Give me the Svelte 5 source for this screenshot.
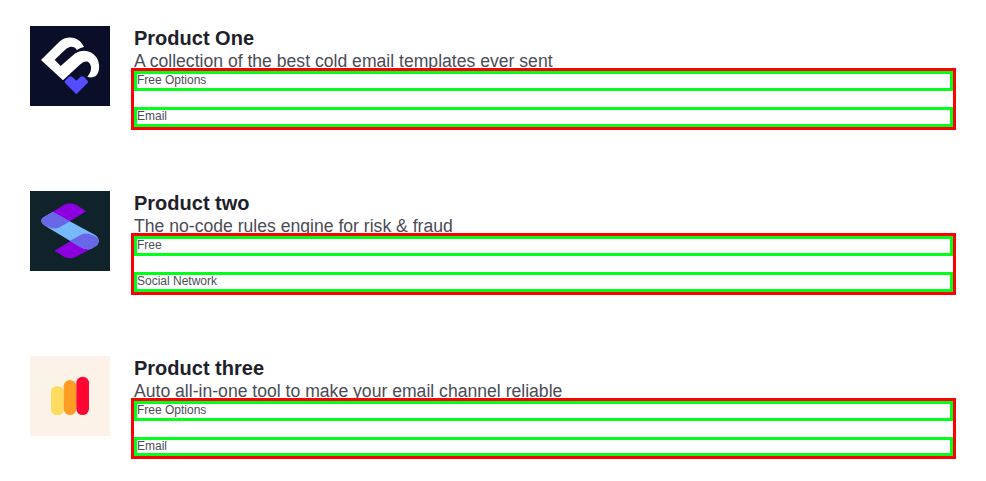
<script>
  const products = [
    { name: 'Product One', text: 'A collection of the best cold email templates ever sent', tags: ['Free Options', 'Email'], logo: 'heart' },
    { name: 'Product two', text: 'The no-code rules engine for risk & fraud', tags: ['Free', 'Social Network'], logo: 'ribbon' },
    { name: 'Product three', text: 'Auto all-in-one tool to make your email channel reliable', tags: ['Free Options', 'Email'], logo: 'bars' }
  ];
</script>

<main>
  {#each products as product}
    <article>
      {#if product.logo === 'heart'}
        <svg class="logo" viewBox="0 0 240 240" aria-hidden="true">
          <rect width="240" height="240" fill="#0b0e29" />
          <path d="M33 102L88 47C108 28 146 28 162 63Q152 64 141 72C132 59 117 59 104 73L74 101L92 120L134 83C156 68 183 72 198 92C212 112 210 140 196 151Q184 157 172 152C184 139 187 122 178 111C170 103 160 107 151 115L99 163Z" fill="#fff" />
          <path d="M105 164L116 153Q121 149 127 153L139 164L151 153Q157 149 162 153L173 164Q176 168 172 172L139 205L106 172Q102 168 105 164Z" fill="#544cff" />
        </svg>
      {:else if product.logo === 'ribbon'}
        <svg class="logo" viewBox="0 0 240 240" aria-hidden="true">
          <rect width="240" height="240" fill="#10232a" />
          <path d="M46 76L103 41Q120 32 138 41L169 61L90 108Q73 117 58 108L41 98Z" fill="#8c00df" />
          <path d="M73 179L153 132Q170 125 184 132L200 142L190 170L138 197Q120 206 102 197Z" fill="#8c00df" />
          <path d="M46 76L68 63L194 131Q206 138 206 149Q206 161 194 167L184 173Q168 178 152 169L50 107Q34 98 34 89Q34 82 46 76Z" fill="#76b9fc" />
          <path d="M46 76L68 63L120 91L90 108Q73 117 58 109L46 104Q34 97 34 89Q34 82 46 76Z" fill="#6767e8" />
          <path d="M120 149L153 131Q168 124 184 131L194 135Q206 142 206 151Q206 161 194 167L184 173Q168 178 152 169Z" fill="#6767e8" />
        </svg>
      {:else}
        <svg class="logo" viewBox="0 0 240 240" aria-hidden="true">
          <rect width="240" height="240" fill="#fcf2e7" />
          <path d="M0 66Q55 35 94 61V90Q45 104 0 91Z" fill="#faf4e6" />
          <rect x="63" y="91" width="38" height="86" rx="16" fill="#fddc60" />
          <rect x="101" y="72" width="38" height="105" rx="19" fill="#ff9d25" />
          <rect x="139" y="62" width="38" height="115" rx="19" fill="#ff0531" />
        </svg>
      {/if}
      <div class="details">
        <h2>{product.name}</h2>
        <p>{product.text}</p>
        <div class="tags">
          {#each product.tags as tag}
            <div class="tag">{tag}</div>
          {/each}
        </div>
      </div>
    </article>
  {/each}
</main>

<style>
  :global(body) {
    margin: 0;
    background: #fff;
  }
  main {
    box-sizing: border-box;
    height: 481px;
    padding: 26.08px 33px 0 30px;
    overflow: hidden;
    font-family: "Liberation Sans", Arial, sans-serif;
  }
  article {
    display: flex;
    align-items: flex-start;
    gap: 24px;
    height: 164.9px;
  }
  .logo {
    flex: none;
    width: 80px;
    height: 80px;
  }
  .details {
    flex: 1;
    min-width: 0;
  }
  h2 {
    margin: 0;
    font-size: 20px;
    line-height: 24px;
    color: #21202a;
  }
  p {
    height: 21px;
    margin: 0;
    font-size: 17.6px;
    line-height: 23px;
    color: #4b4b55;
  }
  .tags {
    display: flex;
    flex-direction: column;
    gap: 16px;
    outline: 3px solid #f00;
  }
  .tag {
    border: 3px solid #00ff19;
    font-size: 12px;
    line-height: 13.8px;
    color: #4b4b55;
  }
</style>
